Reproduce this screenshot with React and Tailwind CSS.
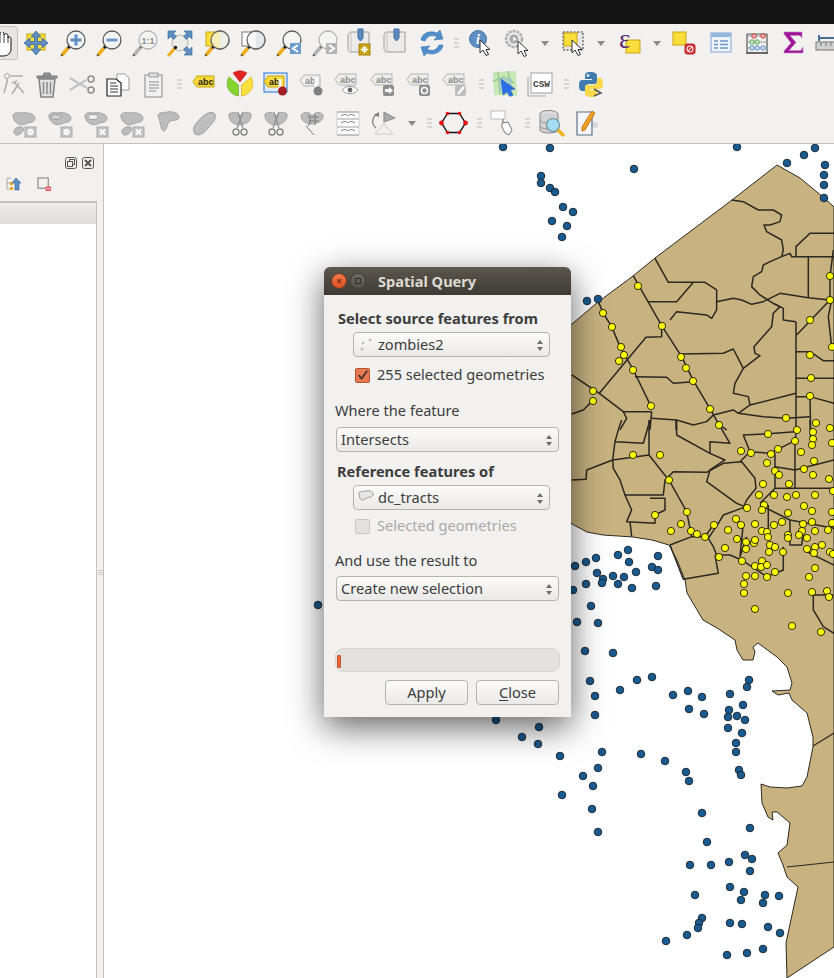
import React from 'react';

const blueDots = [
    [503, 147], [550, 148], [737, 147], [787, 163], [804, 155], [815, 148], [825, 165], [824, 175], [824, 185], [824, 198],
    [634, 169], [541, 176], [541, 183], [550, 188], [555, 192], [563, 207], [573, 212], [552, 221], [567, 226], [562, 237],
    [587, 301], [598, 299], [575, 566], [586, 562], [596, 558], [618, 555], [628, 550], [629, 562], [658, 556], [597, 573],
    [603, 579], [602, 583], [613, 576], [624, 577], [636, 572], [618, 584], [632, 588], [586, 584], [652, 567], [658, 570],
    [656, 586], [573, 590], [591, 606], [577, 622], [598, 623], [585, 651], [613, 653], [590, 681], [595, 696], [620, 690],
    [637, 680], [652, 677], [673, 695], [688, 691], [702, 697], [730, 694], [747, 687], [749, 680], [595, 715], [743, 705],
    [689, 709], [704, 714], [729, 710], [728, 717], [737, 716], [745, 720], [728, 728], [742, 733], [736, 743], [736, 752],
    [739, 770], [741, 775], [539, 727], [522, 737], [538, 744], [560, 756], [602, 752], [641, 754], [665, 761], [686, 772],
    [689, 781], [598, 768], [583, 776], [593, 786], [562, 795], [592, 809], [598, 832], [702, 813], [750, 828], [707, 842],
    [745, 855], [752, 859], [729, 862], [750, 871], [690, 865], [711, 865], [730, 887], [744, 892], [741, 900], [765, 895],
    [763, 903], [779, 896], [695, 895], [702, 918], [699, 923], [698, 928], [687, 935], [666, 941], [730, 923], [742, 924],
    [768, 927], [780, 933], [763, 949], [747, 953], [727, 955], [318, 605], [496, 720],
];

const yellowDots = [
    [638, 286], [603, 313], [612, 327], [621, 347], [624, 355], [619, 361], [633, 370], [593, 391], [593, 401], [651, 406],
    [662, 326], [681, 357], [686, 368], [693, 381], [710, 409], [719, 425], [830, 276], [830, 300], [810, 320], [832, 347],
    [810, 355], [811, 378], [810, 396], [786, 418], [816, 423], [830, 428], [797, 430], [768, 434], [813, 432], [813, 439],
    [812, 445], [795, 441], [832, 443], [778, 449], [771, 454], [751, 453], [741, 451], [801, 452], [814, 461], [767, 463],
    [804, 469], [775, 471], [779, 475], [813, 475], [829, 479], [789, 484], [763, 484], [759, 495], [774, 495], [787, 497],
    [796, 495], [815, 495], [833, 491], [764, 505], [747, 508], [762, 510], [804, 506], [812, 511], [788, 513], [832, 512],
    [736, 519], [741, 525], [755, 524], [782, 522], [774, 525], [803, 524], [812, 522], [832, 523], [714, 525], [728, 530],
    [681, 524], [671, 531], [691, 531], [697, 534], [705, 537], [687, 512], [655, 515], [669, 480], [633, 455], [660, 455],
    [762, 531], [767, 532], [768, 537], [788, 535], [788, 538], [802, 531], [799, 535], [807, 538], [815, 531], [828, 530],
    [737, 539], [746, 542], [754, 543], [755, 540], [770, 545], [775, 547], [746, 549], [769, 552], [783, 552], [807, 549],
    [815, 547], [822, 545], [814, 553], [830, 552], [833, 554], [725, 548], [719, 557], [742, 561], [762, 561], [755, 566],
    [761, 567], [767, 565], [775, 572], [815, 568], [746, 576], [755, 576], [767, 577], [809, 577], [744, 584], [744, 593],
    [788, 593], [812, 592], [827, 591], [829, 597], [755, 609], [792, 626], [821, 632],
];

const cityOutline = 'M777 165 L800 178 L823 197 L834 207 L834 947 L787 978 L786 943 L798 887 L787 877 L783 865 L778 853 L787 845 L790 823 L777 812 L772 812 L773 820 L768 817 L762 803 L761 784 L770 787 L787 788 L802 786 L807 777 L813 747 L813 737 L807 713 L792 700 L789 693 L778 695 L772 691 L790 690 L792 683 L787 667 L777 657 L758 643 L753 647 L755 652 L753 660 L743 660 L737 650 L735 640 L717 628 L703 620 L687 593 L685 580 L677 560 L669 545 L652 540 L633 537 L603 535 L587 532 L572 524 L500 480 L500 380 L572 324 L598 302 L633 276 L655 258 L732 200 Z';

// traced at 3x from the crops, top half sits at (570,150) and lower half at (570,420)
const upperTracts = [
    '485,150 520,155 565,180 610,180 635,195 630,215 600,225 582,225 590,245 635,270 640,300 635,320 600,335 580,345 575,365 550,380 545,410 570,435 610,460',
    '255,325 295,397 405,397 440,420 440,455 490,445 515,450 545,463 580,455 630,430 715,443 780,450',
    '370,397 320,455 235,455',
    '190,378 275,527 335,620 370,692 420,776 447,824',
    '85,455 100,490 125,530 150,590 190,660 242,767',
    '275,527 275,560 228,562 88,730 160,785 245,785',
    '300,510 320,485 410,495 425,505 440,480 440,455',
    '335,612 460,610 490,597 520,655 570,617 555,610 552,590 605,530 610,490 630,470 610,460',
    '520,655 495,700 490,730 535,740 540,765 505,790',
    '195,680 290,682 310,700 370,695',
    '5,675 88,730',
    '5,792 40,780 68,752',
    '680,555 780,450',
    '678,515 640,510 640,475 610,460',
    '678,515 678,840',
    '678,320 715,320 792,320',
    '678,320 678,290 720,250 792,250',
    '715,320 715,443',
    '635,320 660,310 665,320 678,320',
    '678,605 720,605 760,632 792,632',
    '678,685 792,685',
    '678,730 540,765',
    '678,740 720,740 792,760',
    '720,740 722,840',
    '505,790 580,800 650,805 720,800',
    '245,785 240,840',
    '245,805 320,810 370,825 410,815 430,795 490,780 505,790',
    '318,810 318,840',
    '160,785 170,805 150,840',
    '785,450 775,500 785,590',
    '790,300 780,380 780,450',
    '447,824 470,840',
];

const lowerTracts = [
    '155,0 145,30 135,65 220,70 240,0',
    '135,65 128,120 50,150 48,178 5,180',
    '128,120 130,145 150,180 165,225 280,225 285,180 310,155 410,157 460,130 515,125 555,175 558,205 530,240 520,263 460,285 445,310 415,355 430,380 440,405 480,405 515,420',
    '237,105 128,120',
    '237,0 237,105 280,160 297,180 350,275 365,350 300,375',
    '165,225 185,270 170,305 255,310 255,285 285,270 285,235 240,235',
    '180,305 185,350',
    '365,350 405,350 430,315 445,310',
    '300,375 340,478 445,460 435,405',
    '320,0 320,45 420,100 420,65 480,70 447,14',
    '420,100 465,120 420,150 410,185 500,250 530,262',
    '510,125 540,95 600,100 675,62 680,30',
    '540,95 520,45 594,41 675,35',
    '615,100 615,205 570,250',
    '615,140 675,150 792,120',
    '675,60 675,205 792,205',
    '615,205 675,205',
    '570,255 660,300 792,325',
    '595,255 595,340',
    '520,310 510,410 530,350',
    '640,380 640,450 590,470 515,420',
    '660,300 660,375 695,375 700,345',
    '730,525 792,525',
    '730,525 730,570 760,620 792,640',
    '710,395 792,435',
    '720,0 722,60',
];

function Icon({ children, className = '' }) {
    return (
        <svg viewBox="0 0 30 30" className={`w-[30px] h-[30px] shrink-0 overflow-visible ${className}`}>
            {children}
        </svg>
    );
}

function Slot({ w = 36, children }) {
    return (
        <div className="flex items-center justify-center shrink-0" style={{ width: w }}>
            {children}
        </div>
    );
}

function Grip() {
    return (
        <div className="flex flex-col gap-[2px]">
            <span className="block w-[5px] h-[2px] bg-[#d8d6d3]" />
            <span className="block w-[5px] h-[2px] bg-[#d8d6d3]" />
            <span className="block w-[5px] h-[2px] bg-[#d8d6d3]" />
        </div>
    );
}

function DownArrow() {
    return <div className="w-0 h-0 border-l-[4px] border-r-[4px] border-t-[5px] border-l-transparent border-r-transparent border-t-[#8b8a87]" />;
}

function Lens({ fill = '#f4f4f3', stroke = '#5c5c5c', handle = '#f0ad1e', gray = false, children }) {
    return (
        <Icon>
            <path d="M5 27 L11 20" stroke={gray ? '#b5b5b5' : handle} strokeWidth="3.5" />
            <path d="M4 28 L5.5 26.5" stroke="#333" strokeWidth="1.5" />
            <circle cx="12" cy="19" r="1.7" fill={gray ? '#777' : '#111'} />
            <circle cx="19" cy="12" r="9" fill={fill} stroke={gray ? '#b3b3b3' : stroke} strokeWidth="1.3" />
            {children}
        </Icon>
    );
}

function Cursor({ x, y }) {
    return (
        <path
            transform={`translate(${x} ${y})`}
            d="M0 0 L0 13 L3 10 L6 15.5 L8.5 14.5 L6 9.5 L10 9.5 Z"
            fill="#fff"
            stroke="#333"
            strokeWidth="1"
        />
    );
}

function Tag({ text, x = 4, y = 7, w = 21, gray = false, size = 9 }) {
    const fill = gray ? '#eeeeee' : '#f8d93a';
    const line = gray ? '#b3b3b3' : '#c9a50a';
    return (
        <g>
            <path d={`M${x} ${y + 5.5} L${x + 4} ${y} L${x + w} ${y} L${x + w} ${y + 11} L${x + 4} ${y + 11} Z`} fill={fill} stroke={line} strokeWidth="1" />
            <text x={x + 5} y={y + 8.7} fontFamily="Liberation Sans, sans-serif" fontWeight="700" fontSize={size} fill={gray ? '#8a8a8a' : '#222'}>{text}</text>
        </g>
    );
}

function Blob({ small = false }) {
    if (small) {
        return <path d="M5 25 C4 21 9 18 13 19 C16 20 14 24 11 26 C8 28 6 27 5 25 Z" fill="#bcbcbc" stroke="#a3a3a3" />;
    }
    return <path d="M4 9 C3 5 8 4 12 5 C17 4 25 5 26 10 C26 15 20 14 16 16 C12 18 6 16 4 9 Z" fill="#bcbcbc" stroke="#a3a3a3" />;
}

function Badge({ x = false }) {
    return (
        <g>
            <rect x="16" y="19" width="11" height="10" fill="#c4c4c4" stroke="#ababab" />
            {x ? (
                <path d="M19 21.5 L24 26.5 M24 21.5 L19 26.5" stroke="#fff" strokeWidth="2" />
            ) : (
                <g>
                    <circle cx="21.5" cy="24" r="2.2" fill="none" stroke="#fff" strokeWidth="1.4" />
                    <path d="M21.5 20.5 V27.5 M18 24 H25" stroke="#fff" strokeWidth="0.8" />
                </g>
            )}
        </g>
    );
}

function MapSheet({ gear = false }) {
    return (
        <Icon>
            <path d="M6 4 L24 4 L24 24 L6 24 C3 24 3 21 3 20 L3 8 C3 6 4 4 6 4 Z" fill="#ecebe9" stroke="#9b9b9b" />
            <path d="M6 4 V24" stroke="#c4c4c4" />
            <path d="M13 1 H18 V10 L15.5 13 L13 10 Z" fill="#5b8cc0" stroke="#3d6a9c" />
            {gear && (
                <g>
                    <rect x="14" y="16" width="11" height="11" fill="#c9a20c" stroke="#a4830a" />
                    <circle cx="19.5" cy="21.5" r="2" fill="none" stroke="#fff" strokeWidth="1.4" />
                    <path d="M19.5 17.5 V25.5 M15.5 21.5 H23.5" stroke="#fff" strokeWidth="0.9" />
                </g>
            )}
        </Icon>
    );
}

const row1 = [
    { w: 18, el: <HandButton /> },
    {
        el: (
            <Icon>
                <rect x="6" y="6" width="18" height="16" fill="#fbdd3c" stroke="#c9a50a" />
                <path d="M15 3 L20 9 H16.5 V13.5 H21 V10 L27 15 L21 20 V16.5 H16.5 V21 H20 L15 27 L10 21 H13.5 V16.5 H9 V20 L3 15 L9 10 V13.5 H13.5 V9 H10 Z" fill="#5f8fc2" stroke="#3d6a9c" strokeWidth="0.8" />
            </Icon>
        ),
    },
    { el: <Lens><path d="M13.5 12 H24.5 M19 6.5 V17.5" stroke="#5c8cc0" strokeWidth="3" /></Lens> },
    { el: <Lens><path d="M13.5 12 H24.5" stroke="#6d97c4" strokeWidth="3" /></Lens> },
    { el: <Lens gray><text x="19" y="15.5" textAnchor="middle" fontFamily="Liberation Sans, sans-serif" fontWeight="700" fontSize="9" fill="#8c8c8c">1:1</text></Lens> },
    {
        el: (
            <Icon>
                <circle cx="15" cy="15" r="8" fill="#ecece9" stroke="#bbb" />
                <path d="M3 3 H11 L8.5 5.5 L11.5 8.5 L8.5 11.5 L5.5 8.5 L3 11 Z M27 3 H19 L21.5 5.5 L18.5 8.5 L21.5 11.5 L24.5 8.5 L27 11 Z M27 27 H19 L21.5 24.5 L18.5 21.5 L21.5 18.5 L24.5 21.5 L27 19 Z" fill="#5f8fc2" stroke="#3d6a9c" strokeWidth="0.7" />
                <path d="M3 28 L10 20" stroke="#f0ad1e" strokeWidth="3" />
                <circle cx="10.5" cy="19.5" r="1.7" fill="#111" />
            </Icon>
        ),
    },
    {
        el: (
            <Lens fill="none">
                <rect x="5" y="4" width="13" height="14" fill="#fbdd3c" stroke="#c9a50a" />
                <path d="M19 3 A9 9 0 0 1 19 21 Z" fill="#eeeee8" />
                <path d="M19 3 A9 9 0 0 0 19 21 Z" fill="#f6eeb8" />
                <circle cx="19" cy="12" r="9" fill="none" stroke="#666" strokeWidth="1.3" />
            </Lens>
        ),
    },
    {
        el: (
            <Lens fill="none">
                <rect x="5" y="4" width="13" height="14" fill="#fff" stroke="#777" />
                <path d="M19 3 A9 9 0 0 1 19 21 Z" fill="#e4e6e7" />
                <path d="M19 3 A9 9 0 0 0 19 21 Z" fill="#f7f7f7" />
                <circle cx="19" cy="12" r="9" fill="none" stroke="#666" strokeWidth="1.3" />
            </Lens>
        ),
    },
    {
        el: (
            <Lens>
                <rect x="17" y="15" width="11" height="11" fill="#6b9ccc" />
                <path d="M25 17 L20 20.5 L25 24" fill="none" stroke="#fff" strokeWidth="2" />
            </Lens>
        ),
    },
    {
        el: (
            <Lens gray>
                <rect x="17" y="15" width="11" height="11" fill="#b3b3b3" />
                <path d="M20 17 L25 20.5 L20 24" fill="none" stroke="#fff" strokeWidth="2" />
            </Lens>
        ),
    },
    { el: <MapSheet gear /> },
    { el: <MapSheet /> },
    {
        el: (
            <Icon>
                <path d="M4 12 C5 5 13 2 20 5 L23 2 L26 11 L17 12 L20 9 C15 6 10 8 8 13 Z" fill="#4f8fcb" stroke="#3a74ad" strokeWidth="0.6" />
                <path d="M26 17 C25 24 17 28 10 25 L7 28 L4 19 L13 18 L10 21 C15 24 20 22 22 17 Z" fill="#4f8fcb" stroke="#3a74ad" strokeWidth="0.6" />
            </Icon>
        ),
    },
    { w: 13, el: <Grip /> },
    {
        el: (
            <Icon>
                <circle cx="12" cy="11" r="8.5" fill="#5f8fc2" stroke="#4a78aa" />
                <text x="12" y="16" textAnchor="middle" fontFamily="Liberation Serif, serif" fontStyle="italic" fontWeight="700" fontSize="14" fill="#fff">i</text>
                <Cursor x={14} y={12} />
            </Icon>
        ),
    },
    {
        el: (
            <Icon>
                <circle cx="12" cy="11" r="8" fill="#e9e9e9" stroke="#b0b0b0" strokeWidth="2.5" strokeDasharray="3 1" />
                <circle cx="12" cy="11" r="4.5" fill="#a8a8a8" />
                <path d="M11 8.5 L15 11 L11 13.5 Z" fill="#eee" />
                <Cursor x={16} y={13} />
            </Icon>
        ),
    },
    { w: 20, el: <DownArrow /> },
    {
        el: (
            <Icon>
                <rect x="5" y="4" width="20" height="18" fill="#e6e6e6" stroke="#333" strokeDasharray="2 1.5" />
                <rect x="6" y="5" width="13" height="13" fill="#fbdd3c" stroke="#c9a50a" />
                <Cursor x={14} y={12} />
            </Icon>
        ),
    },
    { w: 20, el: <DownArrow /> },
    {
        el: (
            <Icon>
                <rect x="12" y="12" width="14" height="13" fill="#fbdd3c" stroke="#c9a50a" />
                <text x="5" y="20" fontFamily="Liberation Serif, serif" fontSize="27" fill="#5b2a78">ε</text>
            </Icon>
        ),
    },
    { w: 20, el: <DownArrow /> },
    {
        el: (
            <Icon>
                <rect x="3" y="4" width="13" height="13" fill="#fbdd3c" stroke="#c9a50a" />
                <rect x="15" y="16" width="10" height="10" rx="2" fill="#d8383c" stroke="#b02428" />
                <circle cx="20" cy="21" r="3" fill="none" stroke="#fff" />
                <path d="M18 23 L22 19" stroke="#fff" />
            </Icon>
        ),
    },
    {
        el: (
            <Icon>
                <rect x="5" y="5" width="20" height="19" fill="#eef3fa" stroke="#7ea5d0" />
                <rect x="5" y="5" width="20" height="4" fill="#94b7dc" />
                <path d="M8 13 H12 M14 13 H22 M8 16.5 H12 M14 16.5 H22 M8 20 H12 M14 20 H22" stroke="#6d98c8" strokeWidth="1.3" />
            </Icon>
        ),
    },
    {
        el: (
            <Icon>
                <path d="M5 6 V25 M25 6 V25 M5 6 H25" stroke="#555" strokeWidth="1.2" />
                <path d="M5 8 H25 M5 14 H25 M5 20 H25" stroke="#999" />
                <circle cx="12" cy="8" r="2.2" fill="#f4b8b8" stroke="#cc3a3a" />
                <circle cx="21" cy="8" r="2.2" fill="#f4b8b8" stroke="#cc3a3a" />
                <circle cx="10" cy="14" r="2.2" fill="#cdeac8" stroke="#58a858" />
                <circle cx="15" cy="14" r="2.2" fill="#cdeac8" stroke="#58a858" />
                <circle cx="10" cy="20" r="2.2" fill="#cfe0f2" stroke="#5a8fc4" />
                <circle cx="15" cy="20" r="2.2" fill="#cfe0f2" stroke="#5a8fc4" />
                <circle cx="21" cy="20" r="2.2" fill="#cfe0f2" stroke="#5a8fc4" />
                <path d="M4 25 H26" stroke="#666" strokeWidth="2" />
            </Icon>
        ),
    },
    {
        el: (
            <Icon>
                <path d="M6 4 H24 V10 L22 7.5 H12 L18 14.5 L11 22.5 H23 L25 19 V25 H6 L6 23 L13 15 L6 6 Z" fill="#a0149a" stroke="#c583c1" strokeWidth="0.6" />
            </Icon>
        ),
    },
    {
        el: (
            <Icon>
                <path d="M5 7 V13 M5 10 H28" stroke="#4a6f94" strokeWidth="2" />
                <rect x="2" y="14" width="26" height="8" fill="#d0d0d0" stroke="#777" />
                <path d="M7 14 V18 M12 14 V18 M17 14 V18 M22 14 V18" stroke="#777" />
            </Icon>
        ),
    },
];

function HandButton() {
    return (
        <div className="relative w-[18px] h-[34px] bg-[#e6e5e3] border-r border-y border-[#c6c4c1] rounded-r-[4px] overflow-hidden">
            <svg viewBox="0 0 18 26" className="absolute left-0 top-[5px] w-[18px] h-[26px]">
                <path d="M-4 8 L-4 3 C-3 1 -1 1 0 3 L0 1 C1 -1 4 -1 4 2 L4 3 C5 1 8 1 8 4 L8 6 C9 4 11 5 11 7 L11 17 C11 21 8 24 3 24 L-4 24 Z" fill="#fff" stroke="#111" strokeWidth="1" />
                <path d="M0 3 V11 M4 3 V11 M8 5 V11" stroke="#111" strokeWidth="0.8" />
            </svg>
        </div>
    );
}

const row2 = [
    {
        w: 28,
        el: (
            <Icon>
                <circle cx="8" cy="7" r="2.5" fill="none" stroke="#aaa" />
                <path d="M10 7 H24 M8 10 V13 L5 24 M13 25 L20 14 M15 13 L25 24 M13 14 L18 12" stroke="#b0b0b0" strokeWidth="1.6" fill="none" />
            </Icon>
        ),
    },
    {
        el: (
            <Icon>
                <path d="M8 10 H24 L22 28 H10 Z" fill="#e0e0e0" stroke="#828282" strokeWidth="1.5" />
                <path d="M6 7 H26 V9 H6 Z M12 7 L13 4 H19 L20 7" fill="#999" stroke="#777" />
                <path d="M12.5 13 V25 M16 13 V25 M19.5 13 V25" stroke="#888" strokeWidth="1.4" />
            </Icon>
        ),
    },
    {
        el: (
            <Icon>
                <path d="M3 9 L20 19 M3 21 L19 11" stroke="#c4c4c4" strokeWidth="2.2" />
                <circle cx="24" cy="10" r="3" fill="none" stroke="#8d8d8d" strokeWidth="1.5" />
                <circle cx="24" cy="21" r="3" fill="none" stroke="#8d8d8d" strokeWidth="1.5" />
            </Icon>
        ),
    },
    {
        el: (
            <Icon>
                <path d="M14 5 H22 L26 9 V21 H14 Z" fill="#fff" stroke="#999" />
                <path d="M4 10 H13 L18 14 V27 H4 Z" fill="#fff" stroke="#222" strokeWidth="1.2" />
                <path d="M7 14 H13 M7 17 H15 M7 20 H15 M7 23 H15" stroke="#333" />
            </Icon>
        ),
    },
    {
        el: (
            <Icon>
                <rect x="6" y="6" width="17" height="22" fill="#f1f1f1" stroke="#9c9c9c" strokeWidth="1.2" />
                <rect x="10" y="4" width="9" height="4" fill="#ddd" stroke="#999" />
                <path d="M10 13 H20 M10 16 H20 M10 19 H20 M10 22 H17" stroke="#8d8d8d" />
            </Icon>
        ),
    },
    { w: 14, el: <Grip /> },
    { el: <Icon><Tag text="abc" /></Icon> },
    {
        el: (
            <Icon>
                <path d="M8 4 A13 13 0 0 1 22 4 L15 13 Z" fill="#e32222" stroke="#b81818" strokeWidth="0.6" />
                <path d="M4 8 L13.5 16 L13.5 27 A12.5 12.5 0 0 1 4 8 Z" fill="#86d42e" stroke="#5fa018" strokeWidth="0.6" />
                <path d="M26 8 L16.5 16 L16.5 27 A12.5 12.5 0 0 0 26 8 Z" fill="#fbdf3d" stroke="#d4a80c" strokeWidth="0.6" />
            </Icon>
        ),
    },
    {
        el: (
            <Icon>
                <rect x="3" y="4" width="23" height="19" fill="#e2eaf5" stroke="#1e73d8" strokeWidth="1" />
                <Tag text="ab" x={3} y={7} w={20} />
                <path d="M19 10 V20" stroke="#fff" strokeWidth="3" />
                <circle cx="21.5" cy="22" r="4.5" fill="#a51d24" />
            </Icon>
        ),
    },
    {
        el: (
            <Icon>
                <Tag text="ab" x={3} y={6} w={20} gray />
                <path d="M19 9 V20" stroke="#fff" strokeWidth="3" />
                <circle cx="21" cy="22" r="4.5" fill="#808080" />
            </Icon>
        ),
    },
    {
        el: (
            <Icon>
                <Tag text="abc" x={2} y={5} gray />
                <path d="M9 21 C13 16 21 16 25 21 C21 26 13 26 9 21 Z" fill="#fff" stroke="#9a9a9a" />
                <circle cx="17" cy="21" r="2.4" fill="#666" />
            </Icon>
        ),
    },
    {
        el: (
            <Icon>
                <Tag text="abc" x={2} y={5} gray />
                <rect x="14" y="16" width="11" height="11" rx="2" fill="#8e8e8e" />
                <path d="M16 20 H20 V18 L24 21.5 L20 25 V23 H16 Z" fill="#fff" />
            </Icon>
        ),
    },
    {
        el: (
            <Icon>
                <Tag text="abc" x={2} y={5} gray />
                <rect x="14" y="16" width="11" height="11" rx="2" fill="#8e8e8e" />
                <circle cx="19.5" cy="21.5" r="3" fill="none" stroke="#fff" strokeWidth="1.5" />
            </Icon>
        ),
    },
    {
        el: (
            <Icon>
                <Tag text="abc" x={2} y={5} gray />
                <rect x="14" y="16" width="11" height="11" rx="2" fill="#bdbdbd" />
                <path d="M17 25 L23 18" stroke="#fff" strokeWidth="2.4" />
            </Icon>
        ),
    },
    { w: 14, el: <Grip /> },
    {
        w: 34,
        el: (
            <Icon>
                <path d="M3 3 L26 2 L27 27 L4 26 Z" fill="#c9e6b8" />
                <path d="M3 12 L14 8 L24 14 M8 3 L10 25 M18 2 L22 27" stroke="#93cc8a" strokeWidth="1.5" fill="none" />
                <rect x="9" y="9" width="13" height="13" fill="#9cc0e0" opacity="0.5" />
                <path d="M11 10 L25 20 L20 21 L23 26 L20 27.5 L17 23 L13 26 Z" fill="#2a6ee8" stroke="#1d52b8" strokeWidth="0.5" />
            </Icon>
        ),
    },
    {
        el: (
            <Icon>
                <path d="M3 8 V27 H21" fill="none" stroke="#aaa" strokeWidth="1.2" />
                <rect x="6" y="4" width="21" height="20" fill="#fff" stroke="#b0b0b0" strokeWidth="1.2" />
                <text x="16.5" y="18" textAnchor="middle" fontFamily="Liberation Mono, monospace" fontWeight="700" fontSize="9.5" fill="#444">CSW</text>
            </Icon>
        ),
    },
    { w: 16, el: <Grip /> },
    {
        w: 34,
        el: (
            <Icon>
                <path d="M15 3 C9 3 9 5 9 8 V10 H16 V11 H6 C3 11 3 15 3 17 C3 20 4 22 7 22 H9 V19 C9 16 11 15 14 15 H19 C21 15 21 13 21 11 V7 C21 4 18 3 15 3 Z" fill="#3f7cad" />
                <path d="M15 28 C21 28 21 26 21 23 V21 H14 V20 H24 C27 20 27 16 27 14 C27 11 26 9 23 9 H21 V12 C21 15 19 16 16 16 H11 C9 16 9 18 9 20 V24 C9 27 12 28 15 28 Z" fill="#fcd94a" />
                <circle cx="12" cy="6.5" r="1.3" fill="#fff" />
                <path d="M18 20 L25 24 L18 27" fill="none" stroke="#555" strokeWidth="1.5" />
            </Icon>
        ),
    },
];

const row3 = [
    { el: <Icon><Blob /><Blob small /><Badge /></Icon> },
    { el: <Icon><Blob /><ellipse cx="11" cy="9" rx="5" ry="2.5" fill="#cfcfcf" stroke="#9f9f9f" /><Badge /></Icon> },
    { el: <Icon><Blob /><ellipse cx="12" cy="9" rx="5" ry="2.5" fill="#f2f1f0" stroke="#9f9f9f" /><Badge x /></Icon> },
    { el: <Icon><Blob /><Blob small /><Badge x /></Icon> },
    { el: <Icon><path d="M5 8 C5 4 10 5 14 4 C19 3 26 5 26 9 C26 13 20 12 17 13 C14 15 14 22 11 23 C7 23 8 13 5 8 Z" fill="#bcbcbc" stroke="#a3a3a3" /></Icon> },
    { el: <Icon><path d="M6 26 C2 20 7 15 11 11 C15 7 20 3 25 5 C29 9 24 15 20 19 C16 24 11 29 6 26 Z" fill="#bcbcbc" stroke="#a3a3a3" /><path d="M9 23 C7 19 12 15 15 12 C18 9 22 7 24 8" fill="none" stroke="#d2d2d2" /></Icon> },
    {
        el: (
            <Icon>
                <path d="M4 6 C9 3 14 5 15 9 C17 4 22 3 26 6 C27 12 22 16 15 17 C9 17 3 13 4 6 Z" fill="#bcbcbc" stroke="#a3a3a3" />
                <path d="M13 4 L18 20 M18 4 L12 20" stroke="#8e8e8e" strokeWidth="1.2" />
                <circle cx="11" cy="24" r="3" fill="none" stroke="#858585" strokeWidth="1.4" />
                <circle cx="19" cy="24" r="3" fill="none" stroke="#858585" strokeWidth="1.4" />
            </Icon>
        ),
    },
    {
        el: (
            <Icon>
                <path d="M4 6 C9 3 14 5 15 9 C17 4 22 3 26 6 C27 12 22 16 15 17 C9 17 3 13 4 6 Z" fill="#bcbcbc" stroke="#a3a3a3" />
                <path d="M13 4 L18 20 M18 4 L12 20" stroke="#8e8e8e" strokeWidth="1.2" />
                <circle cx="11" cy="24" r="3" fill="none" stroke="#858585" strokeWidth="1.4" />
                <circle cx="19" cy="24" r="3" fill="none" stroke="#858585" strokeWidth="1.4" />
            </Icon>
        ),
    },
    {
        el: (
            <Icon>
                <path d="M4 7 C8 3 13 4 15 8 C18 4 23 3 26 7 C27 12 21 16 15 16 C9 16 4 13 4 7 Z" fill="#bcbcbc" stroke="#a3a3a3" />
                <path d="M11 7 C14 10 14 14 11 18 M18 6 V17 M12 9 H22 M12 13 H22 M9 18 L17 27" fill="none" stroke="#777" />
            </Icon>
        ),
    },
    {
        el: (
            <Icon>
                <path d="M4 4 H26 V27 H4 Z" fill="#fff" stroke="#cfcfcf" />
                <path d="M4 4 H26 M4 11 H26 M4 19 H26 M4 27 H26" stroke="#9f9f9f" />
                <path d="M8 8 C11 6 13 6 15 8 C17 6 19 6 22 8 M8 15 C11 13 13 13 15 15 C17 13 19 13 22 15 M8 23 C11 21 13 21 15 23 C17 21 19 21 22 23" fill="none" stroke="#7b7b7b" />
            </Icon>
        ),
    },
    {
        el: (
            <Icon>
                <path d="M15 4 V16 L6 26 H24 L15 16" fill="none" stroke="#c8c8c8" />
                <path d="M15 4 L26 10 L15 14 Z" fill="#a9a9a9" stroke="#8f8f8f" />
                <path d="M8 6 C3 9 2 16 7 20" fill="none" stroke="#7c7c7c" strokeWidth="1.2" />
                <path d="M5 7 L10 4 V9 Z" fill="#7c7c7c" />
            </Icon>
        ),
    },
    { w: 20, el: <DownArrow /> },
    { w: 15, el: <Grip /> },
    {
        w: 34,
        el: (
            <Icon>
                <path d="M8.5 5.5 H20.5 L26.5 15 L20.5 24.5 H8.5 L2.5 15 Z" fill="none" stroke="#111" strokeWidth="1.4" />
                <circle cx="8.5" cy="5.5" r="1.8" fill="#e81010" />
                <circle cx="20.5" cy="5.5" r="1.8" fill="#e81010" />
                <circle cx="2.5" cy="15" r="2.4" fill="#e81010" />
                <circle cx="26.5" cy="15" r="2.4" fill="#e81010" />
                <circle cx="8.5" cy="24.5" r="1.8" fill="#e81010" />
                <circle cx="20.5" cy="24.5" r="1.8" fill="#e81010" />
            </Icon>
        ),
    },
    { w: 16, el: <Grip /> },
    {
        w: 32,
        el: (
            <Icon>
                <rect x="3" y="3" width="14" height="8" fill="#fff" stroke="#bdbdbd" />
                <path d="M15 11 V16" stroke="#777" strokeWidth="1.2" />
                <path d="M14 15 L20 14 L24 22 L21 27 L17 25 L14 19 Z" fill="#fff" stroke="#777" />
            </Icon>
        ),
    },
    { w: 16, el: <Grip /> },
    {
        w: 34,
        el: (
            <Icon>
                <ellipse cx="12" cy="6" rx="9" ry="3.5" fill="#dcdcdc" stroke="#888" />
                <path d="M3 6 V22 C3 26 21 26 21 22 V6" fill="#d2d2d2" stroke="#888" />
                <path d="M3 12 C3 16 21 16 21 12 M3 18 C3 22 21 22 21 18" fill="none" stroke="#9a9a9a" />
                <path d="M20 21 L27 28" stroke="#f2b21c" strokeWidth="3.5" />
                <circle cx="16" cy="17" r="6.5" fill="#a5dcf2" stroke="#6f8f9f" strokeWidth="1.2" />
            </Icon>
        ),
    },
    {
        w: 34,
        el: (
            <Icon>
                <circle cx="24" cy="17" r="3" fill="#d8d8d8" />
                <path d="M6 4 H21 V27 H6 Z" fill="#f4f6fa" stroke="#5f6f88" strokeWidth="1.2" />
                <path d="M21 3 L24 5 L14 22 L11 23 L11 19 Z" fill="#f2a11f" stroke="#b06a0c" strokeWidth="0.8" />
            </Icon>
        ),
    },
];

function ToolRow({ items, className }) {
    return (
        <div className={`flex items-center ${className}`}>
            {items.map((item, i) => (
                <Slot key={i} w={item.w}>{item.el}</Slot>
            ))}
        </div>
    );
}

function Combo({ children, className = '' }) {
    return (
        <div className={`relative h-[25px] flex items-center pl-[4px] pr-[18px] pb-[2px] rounded-[4px] border border-[#b6b3ae] bg-gradient-to-b from-[#fbfbfa] to-[#ebe9e7] text-[#3c3c3c] ${className}`}>
            {children}
            <div className="absolute right-[6px] top-[7px] flex flex-col gap-[3px]">
                <div className="w-0 h-0 border-l-[3px] border-r-[3px] border-b-[4px] border-l-transparent border-r-transparent border-b-[#6e6d6a]" />
                <div className="w-0 h-0 border-l-[3px] border-r-[3px] border-t-[4px] border-l-transparent border-r-transparent border-t-[#6e6d6a]" />
            </div>
        </div>
    );
}

function SpatialQueryDialog() {
    return (
        <div className="absolute left-[324px] top-[267px] w-[247px] h-[450px] rounded-t-[6px] bg-[#f2f1f0] text-[14.6px] leading-[18px] shadow-[0_10px_34px_rgba(0,0,0,0.62)] font-['Noto_Sans',sans-serif]">
            <div className="h-[28px] flex items-center rounded-t-[6px] bg-gradient-to-b from-[#5c574d] to-[#3e3b35] pl-[7px]">
                <div className="w-[16px] h-[16px] rounded-full bg-gradient-to-b from-[#f0774a] to-[#d9501f] border border-[#6e3a22] flex items-center justify-center text-[#7c2d12] text-[10px] leading-none font-bold">×</div>
                <div className="w-[16px] h-[16px] ml-[3px] rounded-full bg-gradient-to-b from-[#6f6b63] to-[#55524b] border border-[#45423c] flex items-center justify-center">
                    <div className="w-[6px] h-[6px] border border-[#2f2d29]" />
                </div>
                <span className="ml-[12px] font-bold text-[#dfdbd2]">Spatial Query</span>
            </div>
            <div className="pt-[14px] pl-[14px] font-bold text-[#3c3c3c]">Select source features from</div>
            <Combo className="mt-[5px] ml-[29px] w-[197px]">
                <svg viewBox="0 0 16 16" className="w-[16px] h-[16px] mr-[4px]">
                    <circle cx="5" cy="7" r="1" fill="none" stroke="#999" strokeWidth="0.7" />
                    <circle cx="12" cy="4" r="1" fill="none" stroke="#999" strokeWidth="0.7" />
                    <circle cx="4" cy="13" r="1" fill="none" stroke="#999" strokeWidth="0.7" />
                </svg>
                zombies2
            </Combo>
            <div className="mt-[8px] ml-[31px] flex items-center text-[#3c3c3c]">
                <div className="w-[15px] h-[15px] rounded-[2px] bg-[#e67a52] border border-[#b9532c] flex items-center justify-center">
                    <svg viewBox="0 0 15 15" className="w-[15px] h-[15px]">
                        <path d="M3 7 L6.5 11 L13 2" fill="none" stroke="#4b3026" strokeWidth="2" />
                    </svg>
                </div>
                <span className="ml-[7px] pb-[2px]">255 selected geometries</span>
            </div>
            <div className="mt-[16px] ml-[11px] text-[#3c3c3c]">Where the feature</div>
            <Combo className="mt-[8px] ml-[12px] w-[223px]">Intersects</Combo>
            <div className="mt-[10px] ml-[13px] font-bold text-[#3c3c3c]">Reference features of</div>
            <Combo className="mt-[5px] ml-[29px] w-[197px]">
                <svg viewBox="0 0 16 16" className="w-[16px] h-[16px] mr-[4px]">
                    <path d="M1 4 C1 2 5 3 8 2 C12 1 16 3 15 6 C14 9 8 8 5 11 C3 12 1 8 1 4 Z" fill="#e6e6e6" stroke="#999" />
                </svg>
                dc_tracts
            </Combo>
            <div className="mt-[6px] ml-[31px] flex items-center text-[#aaa8a5]">
                <div className="w-[15px] h-[15px] rounded-[2px] bg-[#e4e2e0] border border-[#c9c7c4]" />
                <span className="ml-[7px] pb-[2px]">Selected geometries</span>
            </div>
            <div className="mt-[15px] ml-[11px] text-[#3c3c3c]">And use the result to</div>
            <Combo className="mt-[7px] ml-[12px] w-[223px]">Create new selection</Combo>
            <div className="relative mt-[47px] ml-[11px] w-[225px] h-[24px] rounded-[8px] bg-[#e3e1df] border border-[#d8d6d3]">
                <div className="absolute left-[1px] top-[6px] w-[4px] h-[13px] rounded-[1px] bg-[#e9683a] border border-[#c9542a]" />
            </div>
            <div className="mt-[8px] ml-[61px] flex gap-[8px]">
                <div className="w-[83px] h-[25px] pb-[2px] flex items-center justify-center rounded-[4px] border border-[#b6b3ae] bg-gradient-to-b from-[#fbfbfa] to-[#ebe9e7] text-[#3c3c3c]">Apply</div>
                <div className="w-[83px] h-[25px] pb-[2px] flex items-center justify-center rounded-[4px] border border-[#b6b3ae] bg-gradient-to-b from-[#fbfbfa] to-[#ebe9e7] text-[#3c3c3c]">
                    <span className="underline decoration-1 underline-offset-2">C</span>lose
                </div>
            </div>
        </div>
    );
}

function LayerPanel() {
    return (
        <div className="w-[97px] shrink-0 flex flex-col bg-[#f2f1f0]">
            <div className="h-[27px] flex items-end justify-end pr-[3px] gap-[5px]">
                <svg viewBox="0 0 12 12" className="w-[12px] h-[12px] mb-[2px]">
                    <rect x="0.5" y="0.5" width="11" height="11" rx="2" fill="none" stroke="#555" />
                    <rect x="4.5" y="2.5" width="5" height="5" fill="none" stroke="#555" />
                    <rect x="2.5" y="4.5" width="5" height="5" fill="#f2f1f0" stroke="#555" />
                </svg>
                <svg viewBox="0 0 12 12" className="w-[12px] h-[12px] mb-[2px]">
                    <rect x="0.5" y="0.5" width="11" height="11" rx="2" fill="none" stroke="#555" />
                    <path d="M3 3 L9 9 M9 3 L3 9" stroke="#555" strokeWidth="2" />
                </svg>
            </div>
            <div className="h-[30px] pb-[4px] flex items-center pl-[6px] gap-[15px]">
                <svg viewBox="0 0 16 14" className="w-[16px] h-[14px]">
                    <path d="M1 1 H5 M1 1 V12 M1 6 H4 M1 12 H4" stroke="#aaa" fill="none" />
                    <rect x="4" y="5" width="3" height="3" fill="#f5a623" />
                    <rect x="4" y="10" width="3" height="3" fill="#f5a623" />
                    <path d="M10 1 L15 6 H13 V13 H9 V6 H6 Z" fill="#5f8fc2" stroke="#2f5c8c" strokeWidth="0.6" />
                </svg>
                <svg viewBox="0 0 16 16" className="w-[15px] h-[15px]">
                    <rect x="1" y="1" width="11" height="11" fill="none" stroke="#888" strokeWidth="1.2" />
                    <rect x="9" y="10" width="6" height="5" rx="1" fill="#ee5560" />
                    <path d="M10 12.5 H14" stroke="#fff" />
                </svg>
            </div>
            <div className="flex-1 flex flex-col border-t-2 border-r border-[#c4c2bf]">
                <div className="h-[21px] bg-gradient-to-b from-[#eeedeb] to-[#dfdedc]" />
                <div className="flex-1 bg-white" />
            </div>
        </div>
    );
}

function Splitter() {
    return (
        <div className="w-[7px] shrink-0 flex flex-col items-center justify-center gap-[1px] bg-[#f2f1f0] border-r border-[#c4c2bf] pt-[22px]">
            <span className="block w-[5px] h-[1px] bg-[#cfcdca]" />
            <span className="block w-[5px] h-[1px] bg-[#cfcdca]" />
            <span className="block w-[5px] h-[1px] bg-[#cfcdca]" />
        </div>
    );
}

function MapCanvas() {
    return (
        <div className="flex-1 min-w-0 bg-white">
            <svg viewBox="104 144 730 834" className="block w-[730px] h-[834px]">
                <rect x="104" y="144" width="730" height="834" fill="#fff" />
                <path d={cityOutline} fill="#c8b280" stroke="#2e2a20" strokeWidth="1" strokeLinejoin="round" />
                <g transform="translate(570 150) scale(0.3333)" fill="none" stroke="#2b281f" strokeWidth="4.5" strokeLinejoin="round">
                    {upperTracts.map((p, i) => <polyline key={i} points={p} />)}
                </g>
                <g transform="translate(570 420) scale(0.3333)" fill="none" stroke="#2b281f" strokeWidth="4.5" strokeLinejoin="round">
                    {lowerTracts.map((p, i) => <polyline key={i} points={p} />)}
                </g>
                <path d="M787 867 L834 862 M813 746 L834 733" stroke="#2b281f" strokeWidth="1.2" fill="none" />
                {blueDots.map(([x, y], i) => (
                    <circle key={i} cx={x} cy={y} r="3.8" fill="#1b5a8e" stroke="#12202c" strokeWidth="0.9" />
                ))}
                {yellowDots.map(([x, y], i) => (
                    <circle key={i} cx={x} cy={y} r="3.6" fill="#ffff00" stroke="#1a1a00" strokeWidth="0.9" />
                ))}
            </svg>
        </div>
    );
}

export default function App() {
    return (
        <div className="relative w-[834px] h-[978px] overflow-hidden flex flex-col bg-[#f2f1f0]">
            <div className="h-[24px] shrink-0 bg-[#141414]" />
            <div className="shrink-0 h-[120px] flex flex-col overflow-hidden border-b border-[#c4c2bf]">
                <ToolRow items={row1} className="h-[38px]" />
                <ToolRow items={row2} className="h-[44px]" />
                <ToolRow items={row3} className="h-[34px] pl-[6px]" />
            </div>
            <div className="flex-1 min-h-0 flex">
                <LayerPanel />
                <Splitter />
                <MapCanvas />
            </div>
            <SpatialQueryDialog />
        </div>
    );
}
